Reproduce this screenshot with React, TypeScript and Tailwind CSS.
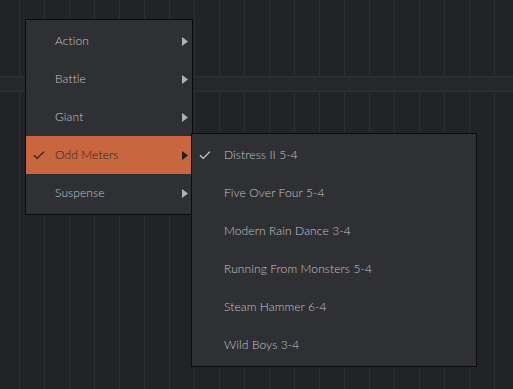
import React from 'react';

const parents = ['Action', 'Battle', 'Giant', 'Odd Meters', 'Suspense'];
const songs = [
  'Distress II 5-4',
  'Five Over Four 5-4',
  'Modern Rain Dance 3-4',
  'Running From Monsters 5-4',
  'Steam Hammer 6-4',
  'Wild Boys 3-4',
];

const Check = ({ className }: { className: string }) => (
  <svg width="12" height="10" viewBox="0 0 12 10" className={className} fill="none">
    <path d="M1 5.2 L4.2 8.4 L11 1.6" stroke="currentColor" strokeWidth="1.3" />
  </svg>
);

const Arrow = ({ className }: { className: string }) => (
  <svg width="6" height="9" viewBox="0 0 6 9" className={className}>
    <path d="M0 0 L6 4.5 L0 9 Z" fill="currentColor" />
  </svg>
);

export default function App() {
  return (
    <div className="relative w-[513px] h-[389px] overflow-hidden bg-[#222326] font-['Lato',sans-serif] font-light text-[12px]">
      {/* background grid */}
      <div className="flex flex-col h-full">
        <div className="h-[76px] bg-[linear-gradient(to_right,#2d2e31_1px,transparent_1px)] bg-[size:25px_100%] bg-[position:19px_0]" />
        <div className="h-[16px] bg-[#27282b] border-y border-[#2d2e31]" />
        <div className="flex-1 bg-[linear-gradient(to_right,#2d2e31_1px,transparent_1px)] bg-[size:25px_100%] bg-[position:19px_0]" />
      </div>

      {/* main menu */}
      <div className="absolute left-[25px] top-[19px] w-[168px] h-[196px] bg-[#2e3034] border border-[#0b0b0c] py-[2px] flex flex-col">
        {parents.map((p) => {
          const active = p === 'Odd Meters';
          return (
            <div
              key={p}
              className={`h-[38px] flex items-center pl-[7px] pr-[4px] ${active ? 'bg-[#c7663f] text-[#2a2320]' : 'text-[#c4c5c7]'}`}
            >
              <div className="w-[22px] flex">
                {active && <Check className="text-[#2a2320]" />}
              </div>
              <span className="flex-1 tracking-[0.1px]">{p}</span>
              <Arrow className={active ? 'text-[#1e1e1e]' : 'text-[#b0b1b3]'} />
            </div>
          );
        })}
      </div>

      {/* sub menu */}
      <div className="absolute left-[191px] top-[133px] w-[286px] h-[234px] bg-[#2e3034] border border-[#0b0b0c] py-[2px] flex flex-col">
        {songs.map((s, i) => (
          <div key={s} className="h-[38px] flex items-center pl-[7px] text-[#c4c5c7]">
            <div className="w-[25px] flex">
              {i === 0 && <Check className="text-[#c9cacc]" />}
            </div>
            <span className="tracking-[0.1px]">{s}</span>
          </div>
        ))}
      </div>
    </div>
  );
}
